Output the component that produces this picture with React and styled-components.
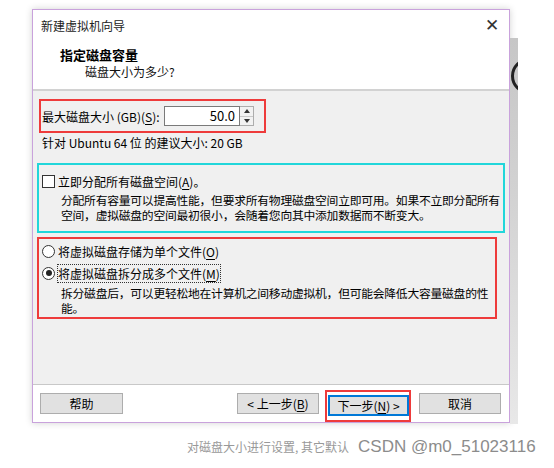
import styled, { createGlobalStyle } from 'styled-components';

const Global = createGlobalStyle`
  html, body {
    margin: 0;
    padding: 0;
    background: #ffffff;
  }
  body {
    font-family: "Noto Sans CJK SC", "Noto Sans", sans-serif;
    font-size: 12px;
    color: #000;
  }
`;

const Page = styled.div`
  width: 554px;
  height: 468px;
  overflow: hidden;
`;

const Stage = styled.div`
  display: flex;
  padding: 9px 0 0 32px;
`;

const Dialog = styled.div`
  width: 478px;
  height: 414px;
  box-sizing: border-box;
  border: 1px solid #c9a2dc;
  display: flex;
  flex-direction: column;
  box-shadow: 0 0 7px rgba(0, 0, 0, 0.18);
  background: #ffffff;
`;

const Strip = styled.div`
  width: 8px;
  height: 386px;
  margin-top: 29px;
  background: linear-gradient(to bottom, #c6c6c6 0%, #d2d2d2 40%, #e8e8e8 100%);
  position: relative;
  overflow: hidden;
`;

const Ring = styled.div`
  position: absolute;
  left: 1px;
  top: 20px;
  width: 30px;
  height: 30px;
  border: 3px solid #222;
  border-radius: 50%;
`;

const TitleBar = styled.div`
  height: 30px;
  display: flex;
  align-items: center;
  justify-content: space-between;
  padding: 0 10px 0 8px;
  color: #222;
`;

const Close = styled.span`
  font-size: 17px;
  font-family: "DejaVu Sans", sans-serif;
  font-weight: 300;
  color: #333;
  line-height: 1;
`;

const Header = styled.div`
  height: 51px;
  padding: 7px 0 0 27px;
  box-sizing: border-box;
  border-bottom: 2px solid #d2d2d2;
`;

const HeadTitle = styled.div`
  font-weight: 700;
  font-size: 13px;
  line-height: 16px;
`;

const HeadSub = styled.div`
  padding-left: 25px;
  line-height: 18px;
  color: #111;
`;

const Body = styled.div`
  flex: 1;
  background: #f0f0f0;
  padding: 8px 0 0 4px;
  display: flex;
  flex-direction: column;
  border-bottom: 1px solid #c8c8c8;
  white-space: nowrap;
`;

const Frame = styled.div`
  box-sizing: border-box;
  border: 2px solid ${p => p.$color};
  width: ${p => p.$w}px;
  height: ${p => p.$h}px;
  margin-left: ${p => p.$ml || 0}px;
  margin-top: ${p => p.$mt || 0}px;
`;

const SizeRow = styled.div`
  display: flex;
  align-items: center;
  height: 100%;
  padding-left: 1px;
`;

const Label = styled.span`
  width: 122px;
`;

const U = styled.span`
  text-decoration: underline;
  text-underline-offset: 2px;
`;

const Input = styled.div`
  width: 76px;
  height: 20px;
  box-sizing: border-box;
  border: 1px solid #7a7a7a;
  background: #fff;
  text-align: right;
  padding-right: 4px;
  font-size: 13px;
  line-height: 18px;
`;

const Spin = styled.div`
  width: 14px;
  height: 20px;
  box-sizing: border-box;
  border: 1px solid #adadad;
  border-left: none;
  display: flex;
  flex-direction: column;
  background: #f2f2f2;
`;

const SpinHalf = styled.div`
  flex: 1;
  display: flex;
  align-items: center;
  justify-content: center;
  & + & {
    border-top: 1px solid #c8c8c8;
  }
`;

const Tri = styled.div`
  width: 0;
  height: 0;
  border-left: 3px solid transparent;
  border-right: 3px solid transparent;
  ${p => (p.$up ? 'border-bottom: 4px solid #333;' : 'border-top: 4px solid #333;')}
`;

const Hint = styled.div`
  padding-left: 5px;
  line-height: 18px;
  margin-top: 1px;
`;

const OptionLine = styled.div`
  display: flex;
  align-items: center;
  height: 18px;
  padding-left: 3px;
  margin-top: ${p => p.$mt || 0}px;
`;

const Check = styled.span`
  width: 11px;
  height: 11px;
  border: 1px solid #333;
  background: #fff;
  margin-right: 3px;
`;

const Radio = styled.span`
  width: 11px;
  height: 11px;
  border: 1px solid #333;
  border-radius: 50%;
  background: #fff;
  margin-right: 3px;
  display: flex;
  align-items: center;
  justify-content: center;
  &::after {
    content: '';
    display: ${p => (p.$on ? 'block' : 'none')};
    width: 6px;
    height: 6px;
    border-radius: 50%;
    background: #222;
  }
`;

const Focus = styled.span`
  outline: 1px dotted #333;
  outline-offset: 0px;
`;

const Desc = styled.div`
  padding-left: 22px;
  font-size: 11.8px;
  line-height: 15px;
  letter-spacing: -0.25px;
  margin-top: ${p => p.$mt || 0}px;
`;

const Footer = styled.div`
  height: 37px;
  display: flex;
  align-items: center;
  padding: 0 7px 0 7px;
`;

const Button = styled.div`
  width: ${p => p.$w || 82}px;
  height: 21px;
  box-sizing: border-box;
  border: 1px solid ${p => (p.$primary ? '#0078d7' : '#adadad')};
  box-shadow: ${p => (p.$primary ? 'inset 0 0 0 1px #0078d7' : 'none')};
  background: #e1e1e1;
  display: flex;
  align-items: center;
  justify-content: center;
  margin-left: ${p => p.$ml || 0}px;
`;

const NextFrame = styled.div`
  box-sizing: border-box;
  width: 86px;
  height: 32px;
  border: 2px solid #ee3b3b;
  padding: 3px 0 0 1px;
  margin-left: 6px;
  margin-top: 4px;
`;

const Caption = styled.div`
  display: flex;
  align-items: baseline;
  padding: 13px 0 0 187px;
  color: #999;
`;

const Brand = styled.span`
  font-family: "Liberation Sans", Arial, sans-serif;
  font-size: 17px;
  color: #8c8c8c;
  margin-left: 9px;
`;

export default function App() {
  return (
    <Page>
      <Global />
      <Stage>
        <Dialog>
          <TitleBar>
            <span>新建虚拟机向导</span>
            <Close>✕</Close>
          </TitleBar>
          <Header>
            <HeadTitle>指定磁盘容量</HeadTitle>
            <HeadSub>磁盘大小为多少?</HeadSub>
          </Header>
          <Body>
            <Frame $color="#ee3b3b" $w={227} $h={34} $ml={2}>
              <SizeRow>
                <Label>
                  最大磁盘大小 (GB)(<U>S</U>):
                </Label>
                <Input>50.0</Input>
                <Spin>
                  <SpinHalf>
                    <Tri $up />
                  </SpinHalf>
                  <SpinHalf>
                    <Tri />
                  </SpinHalf>
                </Spin>
              </SizeRow>
            </Frame>
            <Hint>针对 Ubuntu 64 位 的建议大小: 20 GB</Hint>
            <Frame $color="#22d6da" $w={468} $h={70} $mt={11}>
              <OptionLine $mt={7}>
                <Check />
                立即分配所有磁盘空间(<U>A</U>)。
              </OptionLine>
              <Desc $mt={2}>
                分配所有容量可以提高性能，但要求所有物理磁盘空间立即可用。如果不立即分配所有
                <br />
                空间，虚拟磁盘的空间最初很小，会随着您向其中添加数据而不断变大。
              </Desc>
            </Frame>
            <Frame $color="#ee3b3b" $w={460} $h={82} $mt={4}>
              <OptionLine $mt={3}>
                <Radio />
                将虚拟磁盘存储为单个文件(<U>O</U>)
              </OptionLine>
              <OptionLine $mt={4}>
                <Radio $on />
                <Focus>
                  将虚拟磁盘拆分成多个文件(<U>M</U>)
                </Focus>
              </OptionLine>
              <Desc $mt={3}>
                拆分磁盘后，可以更轻松地在计算机之间移动虚拟机，但可能会降低大容量磁盘的性
                <br />
                能。
              </Desc>
            </Frame>
          </Body>
          <Footer>
            <Button $w={83}>帮助</Button>
            <Button $ml={114}>
              &lt; 上一步(<U>B</U>)
            </Button>
            <NextFrame>
              <Button $w={81} $primary>
                下一步(<U>N</U>) &gt;
              </Button>
            </NextFrame>
            <Button $ml={8}>取消</Button>
          </Footer>
        </Dialog>
        <Strip>
          <Ring />
        </Strip>
      </Stage>
      <Caption>
        <span>对磁盘大小进行设置, 其它默认</span>
        <Brand>CSDN @m0_51023116</Brand>
      </Caption>
    </Page>
  );
}
